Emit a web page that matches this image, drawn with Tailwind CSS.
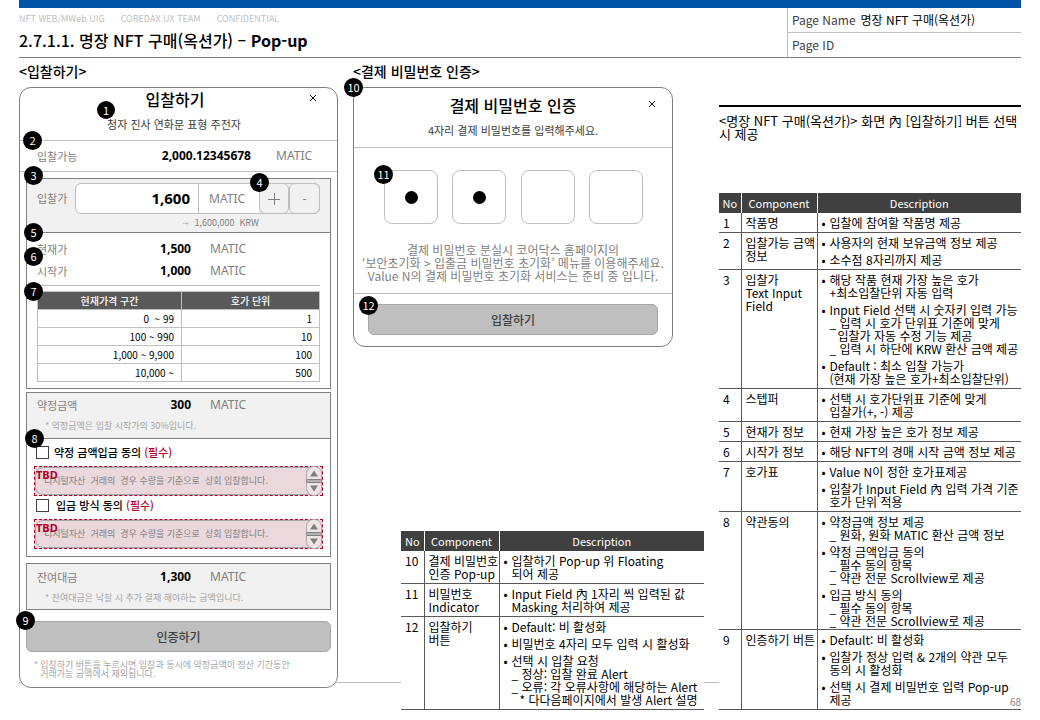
<!DOCTYPE html>
<html lang="ko">
<head>
<meta charset="utf-8">
<meta name="viewport" content="width=device-width, initial-scale=1">
<title>2.7.1.1. 명장 NFT 구매(옥션가) – Pop-up</title>
<script src="https://cdn.jsdelivr.net/npm/@tailwindcss/browser@4"></script>
</head>
<body class="bg-white text-black font-['Noto_Sans_CJK_KR',sans-serif] text-[12px]">
<div class="relative px-[19px] pb-[10px]">
  <div class="h-2 bg-[#0054a6]"></div>
  <header class="flex justify-between border-b border-[#7f7f7f]">
    <div>
      <p class="flex gap-4 pt-[3px] text-[9px] leading-4 text-[#bfbfbf]"><span>NFT WEB/MWeb UIG</span><span>COREDAX UX TEAM</span><span>CONFIDENTIAL</span></p>
      <h1 class="pt-[1px] text-[16px] leading-6 font-medium">2.7.1.1. 명장 NFT 구매(옥션가) – <b>Pop-up</b></h1>
    </div>
    <dl class="w-[234px] border-l border-[#bfbfbf] text-[12px] leading-6">
      <div class="flex gap-[5px] border-b border-[#bfbfbf] pl-1"><dt class="text-[#404040]">Page Name</dt><dd>명장 NFT 구매(옥션가)</dd></div>
      <div class="flex pl-1"><dt class="text-[#404040]">Page ID</dt><dd></dd></div>
    </dl>
  </header>

  <div class="absolute top-[682px] right-[19px] left-[19px] h-px bg-[#bfbfbf]"></div>

  <main class="relative grid grid-cols-[319fr_351fr_302fr] gap-[15px]">
    <!-- Bid pop-up -->
    <section>
      <h2 class="mb-[3px] text-[14px] leading-[26px] font-medium">&lt;입찰하기&gt;</h2>
      <div class="rounded-xl border border-[#7f7f7f] bg-white">
        <div class="relative border-b border-[#bfbfbf] text-center">
          <h3 class="pr-[7px] text-[16px] leading-[22px] font-medium">입찰하기</h3>
          <p class="mt-[5px] mb-[7px] pr-[9px] text-[11px] leading-[18px] text-[#404040]">청자 진사 연화문 표형 주전자</p>
          <button aria-label="닫기" class="absolute top-[5px] right-[19px] flex size-[10px] items-center justify-center"><svg class="size-[8px]" viewBox="0 0 8 8" stroke="#111" stroke-width="1"><path d="M1 1l6 6M7 1L1 7"/></svg></button>
          <span class="absolute top-[13px] left-[77px] size-[18px] rounded-full bg-black text-center text-[11px] leading-[18px] text-white">1</span>
        </div>
        <div class="relative flex h-[31px] items-center border-b border-[#bfbfbf] pl-[17px]">
          <span class="text-[11px] text-[#7f7f7f]">입찰가능</span>
          <span class="flex-1 text-right font-['Noto_Sans'] font-bold">2,000.12345678</span>
          <span class="ml-[25px] w-[61px] font-['Noto_Sans'] text-[#7f7f7f]">MATIC</span>
          <span class="absolute -top-[10px] left-[3px] size-[19px] rounded-full bg-black text-center text-[11px] leading-[18px] text-white">2</span>
        </div>
        <div class="px-[6px] pt-[6px] pb-[9px]">
          <div class="border border-[#7f7f7f]">
            <div class="relative border-b border-[#7f7f7f] bg-[#f1f1f1] px-[10px] pt-1">
              <div class="flex h-[31px] items-center">
                <label for="bid" class="w-[38px] text-[11px] text-[#7f7f7f]">입찰가</label>
                <div class="flex h-full flex-1 rounded-md border border-[#bfbfbf] bg-[#f1f1f1]">
                  <input id="bid" value="1,600" class="w-0 flex-1 rounded-l-md border-r border-[#bfbfbf] bg-white pr-2 text-right font-['Noto_Sans'] text-[15px] font-bold">
                  <span class="flex w-[60px] items-center bg-white pl-[10px] font-['Noto_Sans'] text-[#7f7f7f]">MATIC</span>
                  <button aria-label="증가" class="-my-px flex w-[30px] items-center justify-center rounded-md border border-[#bfbfbf]"><svg class="size-[12px]" viewBox="0 0 12 12" stroke="#7f7f7f"><path d="M0 6.5h12M6.5 0v12"/></svg></button>
                  <button aria-label="감소" class="-my-px -mr-px flex w-[31px] items-center justify-center rounded-md border border-[#bfbfbf] text-[#7f7f7f]">-</button>
                </div>
              </div>
              <p class="pr-[61px] text-right text-[9px] leading-[18px] whitespace-pre text-[#7f7f7f]">∼  1,600,000  KRW</p>
              <span class="absolute -top-[13px] -left-[3px] size-[19px] rounded-full bg-black text-center text-[11px] leading-[18px] text-white">3</span>
              <span class="absolute -top-[6px] left-[223px] size-[19px] rounded-full bg-black text-center text-[11px] leading-[18px] text-white">4</span>
              <span class="absolute top-[44px] -left-[3px] size-[19px] rounded-full bg-black text-center text-[11px] leading-[18px] text-white z-10">5</span>
            </div>
            <div class="relative px-[10px] pt-[5px] pb-[6px]">
              <div class="flex h-[22px] items-center"><span class="w-[64px] text-[11px] text-[#7f7f7f]">현재가</span><span class="w-[90px] text-right font-['Noto_Sans'] font-bold">1,500</span><span class="ml-[19px] font-['Noto_Sans'] text-[#7f7f7f]">MATIC</span></div>
              <div class="flex h-[22px] items-center"><span class="w-[64px] text-[11px] text-[#7f7f7f]">시작가</span><span class="w-[90px] text-right font-['Noto_Sans'] font-bold">1,000</span><span class="ml-[19px] font-['Noto_Sans'] text-[#7f7f7f]">MATIC</span></div>
              <hr class="mt-[3px] mb-[5px] border-[#bfbfbf]">
              <table class="w-full table-fixed border-collapse text-[10px] leading-[17px]">
                <thead><tr class="bg-[#595959] text-white"><th class="w-[144px] border border-[#bfbfbf] font-medium">현재가격 구간</th><th class="border border-[#bfbfbf] font-medium">호가 단위</th></tr></thead>
                <tbody class="text-right">
                  <tr><td class="border border-[#bfbfbf] pr-[7px] whitespace-pre">0  ~ 99</td><td class="border border-[#bfbfbf] pr-[7px]">1</td></tr>
                  <tr><td class="border border-[#bfbfbf] pr-[7px]">100 ~ 990</td><td class="border border-[#bfbfbf] pr-[7px]">10</td></tr>
                  <tr><td class="border border-[#bfbfbf] pr-[7px]">1,000 ~ 9,900</td><td class="border border-[#bfbfbf] pr-[7px]">100</td></tr>
                  <tr><td class="border border-[#bfbfbf] pr-[7px]">10,000 ~</td><td class="border border-[#bfbfbf] pr-[7px]">500</td></tr>
                </tbody>
              </table>
              <span class="absolute top-[14px] -left-[3px] size-[19px] rounded-full bg-black text-center text-[11px] leading-[18px] text-white">6</span>
              <span class="absolute top-[49px] -left-[3px] size-[19px] rounded-full bg-black text-center text-[11px] leading-[18px] text-white">7</span>
            </div>
          </div>

          <div class="mt-[3px] border border-[#7f7f7f]">
            <div class="relative border-b border-[#7f7f7f] bg-[#f1f1f1] px-[10px] pb-[3px]">
              <div class="flex h-6 items-center"><span class="w-[64px] text-[11px] text-[#7f7f7f]">약정금액</span><span class="w-[90px] text-right font-['Noto_Sans'] font-bold">300</span><span class="ml-[19px] font-['Noto_Sans'] text-[#7f7f7f]">MATIC</span></div>
              <p class="pl-2 text-[9px] leading-[18px] text-[#a6a6a6]">* 약정금액은 입찰 시작가의 30%입니다.</p>
              <span class="absolute -bottom-[10px] -left-[2px] z-10 size-[19px] rounded-full bg-black text-center text-[11px] leading-[18px] text-white">8</span>
            </div>
            <div class="pt-1 pr-[7px] pb-[7px] pl-[7px]">
              <label class="flex h-[18px] items-center gap-[5px] pl-[2px] text-[11px] font-medium"><input type="checkbox" class="size-[13px] appearance-none border border-[#404040] bg-white"><span>약정 금액입금 동의 <span class="text-[#b0002a]">(필수)</span></span></label>
              <div class="relative mt-[5px] h-[30px] border border-dashed border-[#b0002a] bg-[#ead8dc]">
                <div class="flex h-full items-center rounded-lg border border-[#a6a6a6] pl-2 text-[9px] whitespace-pre text-[#7f7f7f]">디지털자산  거래의  경우 수량을 기준으로  상회 입찰합니다.</div>
                <b class="absolute top-0 left-px font-['Noto_Sans'] text-[11px] leading-4 text-[#b0002a]">TBD</b>
                <svg class="absolute -top-px right-0 h-[30px] w-[16px]" viewBox="0 0 16 30"><rect x=".5" y=".5" width="15" height="29" rx="7" fill="#eee4e6" stroke="#a6a6a6"/><path d="M8 4.500l4 6H4zM8 25.500l4-6H4z" fill="#7f7f7f"/><rect x=".5" y="13.500" width="15" height="3" rx="1" fill="#b5b0b1" stroke="#7f7f7f"/></svg>
              </div>
              <label class="flex h-[18px] items-center gap-[7px] pl-[2px] text-[11px] font-medium"><input type="checkbox" class="size-[13px] appearance-none border border-[#404040] bg-white"><span>입금 방식 동의 <span class="text-[#b0002a]">(필수)</span></span></label>
              <div class="relative mt-[5px] h-[30px] border border-dashed border-[#b0002a] bg-[#ead8dc]">
                <div class="flex h-full items-center rounded-lg border border-[#a6a6a6] pl-2 text-[9px] whitespace-pre text-[#7f7f7f]">디지털자산  거래의  경우 수량을 기준으로  상회 입찰합니다.</div>
                <b class="absolute top-0 left-px font-['Noto_Sans'] text-[11px] leading-4 text-[#b0002a]">TBD</b>
                <svg class="absolute -top-px right-0 h-[30px] w-[16px]" viewBox="0 0 16 30"><rect x=".5" y=".5" width="15" height="29" rx="7" fill="#eee4e6" stroke="#a6a6a6"/><path d="M8 4.500l4 6H4zM8 25.500l4-6H4z" fill="#7f7f7f"/><rect x=".5" y="13.500" width="15" height="3" rx="1" fill="#b5b0b1" stroke="#7f7f7f"/></svg>
              </div>
            </div>
          </div>

          <div class="mt-[6px] border border-[#7f7f7f] bg-[#f1f1f1] px-[10px] pb-1">
            <div class="flex h-[26px] items-center"><span class="w-[64px] text-[11px] text-[#7f7f7f]">잔여대금</span><span class="w-[90px] text-right font-['Noto_Sans'] font-bold">1,300</span><span class="ml-[19px] font-['Noto_Sans'] text-[#7f7f7f]">MATIC</span></div>
            <p class="pl-2 text-[9px] leading-[15px] text-[#a6a6a6]">* 잔여대금은 낙찰 시 추가 결제 해야하는 금액입니다.</p>
          </div>

          <div class="relative mt-[11px]">
            <button class="block h-[31px] w-full rounded-md border border-[#a6a6a6] bg-[#bfbfbf] text-[12px] font-medium text-[#404040]">인증하기</button>
            <span class="absolute -top-[10px] -left-[10px] size-[19px] rounded-full bg-black text-center text-[11px] leading-[18px] text-white">9</span>
          </div>
          <p class="mt-2 flex gap-[2px] pl-2 text-[9px] leading-[9px] text-[#a6a6a6]"><span>*</span><span>입찰하기 버튼을 누르시면 입찰과 동시에 약정금액이 정산 기간동안<br>거래가능 금액에서 제외됩니다.</span></p>
        </div>
      </div>
    </section>

    <!-- Payment password pop-up and its component table -->
    <section>
      <h2 class="mb-[3px] text-[14px] leading-[26px] font-medium">&lt;결제 비밀번호 인증&gt;</h2>
      <div class="relative mr-[31px] rounded-xl border border-[#7f7f7f] bg-white">
        <div class="relative border-b border-[#bfbfbf] pt-[5px] pb-2 text-center">
          <h3 class="text-[16px] leading-6 font-medium">결제 비밀번호 인증</h3>
          <p class="mt-[5px] text-[11px] leading-[17px] text-[#404040]">4자리 결제 비밀번호를 입력해주세요.</p>
          <button aria-label="닫기" class="absolute top-[11px] right-[15px] flex size-[10px] items-center justify-center"><svg class="size-[8px]" viewBox="0 0 8 8" stroke="#111" stroke-width="1"><path d="M1 1l6 6M7 1L1 7"/></svg></button>
        </div>
        <div class="relative flex justify-between pt-[22px] pr-[29px] pl-[30px]">
          <div class="flex size-[54px] items-center justify-center rounded-lg border border-[#bfbfbf]"><i class="size-[13px] rounded-full bg-black"></i></div>
          <div class="flex size-[54px] items-center justify-center rounded-lg border border-[#bfbfbf]"><i class="size-[13px] rounded-full bg-black"></i></div>
          <div class="size-[54px] rounded-lg border border-[#bfbfbf]"></div>
          <div class="size-[54px] rounded-lg border border-[#bfbfbf]"></div>
          <span class="absolute top-[17px] left-[20px] size-[19px] rounded-full bg-black text-center text-[11px] leading-[18px] text-white">11</span>
        </div>
        <p class="pt-[19px] pb-[11px] text-center text-[12px] leading-[13px] whitespace-nowrap text-[#7f7f7f]">결제 비밀번호 분실시 코어닥스 홈페이지의<br>‘보안초기화 &gt; 입출금 비밀번호 초기화’ 메뉴를 이용해주세요.<br>Value N의 결제 비밀번호 초기화 서비스는 준비 중 입니다.</p>
        <div class="relative border-t border-[#bfbfbf] px-[14px] pt-[10px] pb-[11px]">
          <button class="block h-[31px] w-full rounded-md border border-[#a6a6a6] bg-[#bfbfbf] text-[12px] font-medium text-[#404040]">입찰하기</button>
          <span class="absolute top-[2px] left-[5px] size-[19px] rounded-full bg-black text-center text-[11px] leading-[18px] text-white">12</span>
        </div>
        <span class="absolute -top-[10px] -left-[10px] size-[19px] rounded-full bg-black text-center text-[11px] leading-[18px] text-white">10</span>
      </div>

      <div class="mt-[184px] ml-[48px] bg-white">
        <table class="w-full table-fixed border-collapse text-left text-[12px] leading-[13px]">
          <thead><tr class="h-5 bg-[#404040] text-center text-[11px] text-white"><th class="w-[23px] border-r border-white font-normal">No</th><th class="w-[75px] border-r border-white font-normal">Component</th><th class="font-normal">Description</th></tr></thead>
          <tbody class="align-top">
            <tr class="border-b border-[#595959]"><td class="border-r border-[#595959] py-[3px] pl-1">10</td><td class="border-r border-[#595959] py-[3px] pl-1 whitespace-nowrap">결제 비밀번호<br>인증 Pop-up</td><td class="py-[3px] pl-1"><ul class="space-y-1 whitespace-nowrap"><li class="flex"><span class="w-2">•</span><span>입찰하기 Pop-up 위 Floating<br>되어 제공</span></li></ul></td></tr>
            <tr class="border-b border-[#595959]"><td class="border-r border-[#595959] py-[3px] pl-1">11</td><td class="border-r border-[#595959] py-[3px] pl-1">비밀번호<br>Indicator</td><td class="py-[3px] pl-1"><ul class="space-y-1 whitespace-nowrap"><li class="flex"><span class="w-2">•</span><span>Input Field 內 1자리 씩 입력된 값<br>Masking 처리하여 제공</span></li></ul></td></tr>
            <tr class="border-b border-[#595959]"><td class="border-r border-[#595959] py-[3px] pl-1">12</td><td class="border-r border-[#595959] py-[3px] pl-1">입찰하기<br>버튼</td><td class="py-[3px] pl-1"><ul class="space-y-1 whitespace-nowrap"><li class="flex"><span class="w-2">•</span><span>Default: 비 활성화</span></li><li class="flex"><span class="w-2">•</span><span>비밀번호 4자리 모두 입력 시 활성화</span></li><li class="flex"><span class="w-2">•</span><span>선택 시 입찰 요청<br>_ 정상: 입찰 완료 Alert<br>_ 오류: 각 오류사항에 해당하는 Alert<br><span class="pl-2">* 다다음페이지에서 발생 Alert 설명</span></span></li></ul></td></tr>
          </tbody>
        </table>
      </div>
    </section>

    <!-- Screen description -->
    <section class="pt-[47px]">
      <p class="border-t-2 border-black pt-[7px] text-[13px] leading-[13px] whitespace-nowrap">&lt;명장 NFT 구매(옥션가)&gt; 화면 內 [입찰하기] 버튼 선택<br>시 제공</p>
      <div class="mt-[53px] bg-white">
        <table class="w-full table-fixed border-collapse text-left text-[12px] leading-[13px]">
          <thead><tr class="h-5 bg-[#404040] text-center text-[11px] text-white"><th class="w-[22px] border-r border-white font-normal">No</th><th class="w-[76px] border-r border-white font-normal">Component</th><th class="font-normal">Description</th></tr></thead>
          <tbody class="align-top">
            <tr class="border-b border-[#595959]"><td class="border-r border-[#595959] py-[3px] pl-1">1</td><td class="border-r border-[#595959] py-[3px] pl-1">작품명</td><td class="py-[3px] pl-1"><ul class="space-y-1 whitespace-nowrap"><li class="flex"><span class="w-2">•</span><span>입찰에 참여할 작품명 제공</span></li></ul></td></tr>
            <tr class="border-b border-[#595959]"><td class="border-r border-[#595959] py-[3px] pl-1">2</td><td class="border-r border-[#595959] py-[3px] pl-1 whitespace-nowrap">입찰가능 금액<br>정보</td><td class="py-[3px] pl-1"><ul class="space-y-1 whitespace-nowrap"><li class="flex"><span class="w-2">•</span><span>사용자의 현재 보유금액 정보 제공</span></li><li class="flex"><span class="w-2">•</span><span>소수점 8자리까지 제공</span></li></ul></td></tr>
            <tr class="border-b border-[#595959]"><td class="border-r border-[#595959] py-[3px] pl-1">3</td><td class="border-r border-[#595959] py-[3px] pl-1">입찰가<br>Text Input<br>Field</td><td class="py-[3px] pl-1"><ul class="space-y-1 whitespace-nowrap"><li class="flex"><span class="w-2">•</span><span>해당 작품 현재 가장 높은 호가<br>+최소입찰단위 자동 입력</span></li><li class="flex"><span class="w-2">•</span><span>Input Field 선택 시 숫자키 입력 가능<br>_ 입력 시 호가 단위표 기준에 맞게<br><span class="pl-2">입찰가 자동 수정 기능 제공</span><br>_ 입력 시 하단에 KRW 환산 금액 제공</span></li><li class="flex"><span class="w-2">•</span><span>Default : 최소 입찰 가능가<br>(현재 가장 높은 호가+최소입찰단위)</span></li></ul></td></tr>
            <tr class="border-b border-[#595959]"><td class="border-r border-[#595959] py-[3px] pl-1">4</td><td class="border-r border-[#595959] py-[3px] pl-1">스텝퍼</td><td class="py-[3px] pl-1"><ul class="space-y-1 whitespace-nowrap"><li class="flex"><span class="w-2">•</span><span>선택 시 호가단위표 기준에 맞게<br>입찰가(+, -) 제공</span></li></ul></td></tr>
            <tr class="border-b border-[#595959]"><td class="border-r border-[#595959] py-[3px] pl-1">5</td><td class="border-r border-[#595959] py-[3px] pl-1">현재가 정보</td><td class="py-[3px] pl-1"><ul class="space-y-1 whitespace-nowrap"><li class="flex"><span class="w-2">•</span><span>현재 가장 높은 호가 정보 제공</span></li></ul></td></tr>
            <tr class="border-b border-[#595959]"><td class="border-r border-[#595959] py-[3px] pl-1">6</td><td class="border-r border-[#595959] py-[3px] pl-1">시작가 정보</td><td class="py-[3px] pl-1"><ul class="space-y-1 whitespace-nowrap"><li class="flex"><span class="w-2">•</span><span>해당 NFT의 경매 시작 금액 정보 제공</span></li></ul></td></tr>
            <tr class="border-b border-[#595959]"><td class="border-r border-[#595959] py-[3px] pl-1">7</td><td class="border-r border-[#595959] py-[3px] pl-1">호가표</td><td class="py-[3px] pl-1"><ul class="space-y-1 whitespace-nowrap"><li class="flex"><span class="w-2">•</span><span>Value N이 정한 호가표제공</span></li><li class="flex"><span class="w-2">•</span><span>입찰가 Input Field 內 입력 가격 기준<br>호가 단위 적용</span></li></ul></td></tr>
            <tr class="border-b border-[#595959]"><td class="border-r border-[#595959] py-[3px] pl-1">8</td><td class="border-r border-[#595959] py-[3px] pl-1">약관동의</td><td class="pt-[3px] pb-[2px] pl-1"><ul class="space-y-1 whitespace-nowrap"><li class="flex"><span class="w-2">•</span><span>약정금액 정보 제공<br>_ 원화, 원화 MATIC 환산 금액 정보</span></li><li class="flex"><span class="w-2">•</span><span>약정 금액입금 동의<br>_ 필수 동의 항목<br>_ 약관 전문 Scrollview로 제공</span></li><li class="flex"><span class="w-2">•</span><span>입금 방식 동의<br>_ 필수 동의 항목<br>_ 약관 전문 Scrollview로 제공</span></li></ul></td></tr>
            <tr class="border-b border-[#595959]"><td class="border-r border-[#595959] py-[3px] pl-1">9</td><td class="border-r border-[#595959] py-[3px] pl-1 whitespace-nowrap">인증하기 버튼</td><td class="py-[3px] pl-1"><ul class="space-y-1 whitespace-nowrap"><li class="flex"><span class="w-2">•</span><span>Default: 비 활성화</span></li><li class="flex"><span class="w-2">•</span><span>입찰가 정상 입력 &amp; 2개의 약관 모두<br>동의 시 활성화</span></li><li class="flex"><span class="w-2">•</span><span>선택 시 결제 비밀번호 입력 Pop-up<br>제공</span></li></ul></td></tr>
          </tbody>
        </table>
      </div>
    </section>
  </main>
  <span class="absolute right-[19px] bottom-[10px] text-[10px] leading-4 text-[#7f7f7f]">68</span>
</div>
</body>
</html>
